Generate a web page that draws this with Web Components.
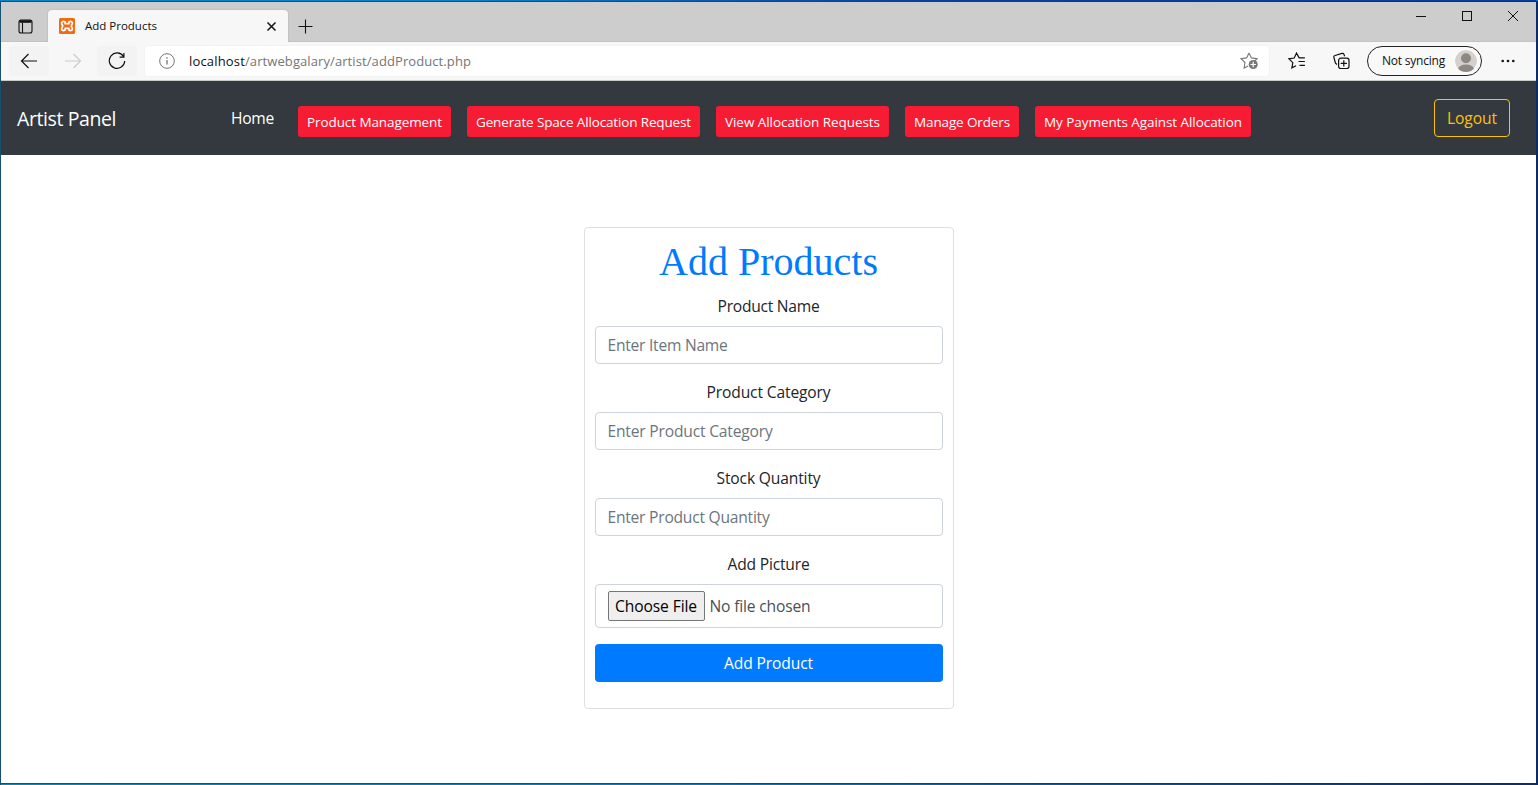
<!DOCTYPE html>
<html lang="en">
<head>
<meta charset="utf-8">
<title>Add Products</title>
<style>
html, body { margin: 0; height: 100%; overflow: hidden; }
body { font-family: "Open Sans", "Noto Sans", sans-serif; color: #212529; }
</style>
</head>
<body>
<app-window></app-window>
<script>
const define = (name, html, ready) => {
  const template = document.createElement('template');
  template.innerHTML = html;
  customElements.define(name, class extends HTMLElement {
    constructor() {
      super();
      this.attachShadow({ mode: 'open' }).append(template.content.cloneNode(true));
    }
    connectedCallback() { if (ready) ready(this, this.shadowRoot); }
  });
};

// One line of text, tracked so that it fills the given width.
const tracking = (text, font, width) => {
  const ctx = document.createElement('canvas').getContext('2d');
  ctx.font = font;
  return (width - ctx.measureText(text).width) / text.length;
};
define('fit-text', `<style>
:host { display: inline-block; white-space: pre; flex: none; }
</style><slot></slot>`, el => {
  const w = +el.getAttribute('w');
  const cs = getComputedStyle(el);
  el.style.width = w + 'px';
  el.style.letterSpacing = tracking(el.textContent, cs.fontSize + ' ' + cs.fontFamily, w) + 'px';
});

define('tab-strip', `<style>
:host { display: flex; height: 40px; background: #cdcdcd; box-shadow: inset 0 -1px #c3c3c3; align-items: stretch; color: #111; }
svg { display: block; flex: none; }
.menu { padding: 17px 15px 0 17px; }
.tab { display: flex; align-items: center; width: 240px; height: 32px; margin-top: 8px; background: #f7f7f7; border-radius: 4px 4px 0 0; font-size: 11.5px; box-sizing: border-box; padding: 0 11px; box-shadow: 0 0 2px #0003; clip-path: inset(-3px -3px 0 -3px); }
.tab fit-text { margin: 0 auto 2px 10px; }
.plus { margin: 17px 0 0 10px; }
.controls { display: flex; margin-left: auto; gap: 34px; padding: 7px 17px 0 0; }
</style>
<svg class="menu" width="15" height="15" viewBox="0 0 15 15" fill="none" stroke="#111" stroke-width="1.1"><rect x="1" y="1" width="13" height="13" rx="2"/><path d="M1.500 2.500h12" stroke-width="2.600"/><path d="M4.500 4v10"/></svg>
<div class="tab">
<svg width="16" height="16" viewBox="0 0 16 16"><rect width="16" height="16" rx="1.500" fill="#f56a10"/><path d="M6.100 3.900C4 2.800 2.500 3.900 2.600 5.300 2.700 6.500 3.700 7 3.700 8s-1 1.500-1.100 2.700C2.500 12.100 4 13.200 6.100 12.100V10.300H9.900V12.100C12 13.200 13.500 12.100 13.400 10.700 13.300 9.500 12.300 9 12.300 8s1-1.500 1.100-2.700C13.500 3.900 12 2.800 9.900 3.900V5.700H6.100Z" fill="none" stroke="#fff" stroke-width="1.700" stroke-linejoin="round"/></svg>
<fit-text w="72">Add Products</fit-text>
<svg width="11" height="11" viewBox="0 0 11 11" stroke="#111" stroke-width="1.5"><path d="M1.500 1.500l8 8M9.500 1.500l-8 8"/></svg>
</div>
<svg class="plus" width="15" height="15" viewBox="0 0 15 15" stroke="#111" stroke-width="1.100"><path d="M7.500 .5v14M.5 7.500h14"/></svg>
<div class="controls">
<svg width="12" height="14" viewBox="0 0 12 14" stroke="#111"><path d="M1 7.500h10"/></svg>
<svg width="12" height="14" viewBox="0 0 12 14" stroke="#111" fill="none"><rect x="1.500" y="2.500" width="9" height="9"/></svg>
<svg width="12" height="14" viewBox="0 0 12 14" stroke="#111"><path d="M1 2l10 10M11 2L1 12"/></svg>
</div>`);

define('address-bar', `<style>
:host { display: flex; height: 38px; background: #f7f7f7; border-bottom: 1px solid #c9cccb; align-items: center; box-sizing: content-box; color: #111; }
svg { display: block; flex: none; }
.btn { display: flex; align-items: center; justify-content: center; width: 40px; height: 30px; margin-left: 8px; border-radius: 3px; background: #f3f3f3; }
.btn + .btn { margin-left: 4px; }
.box { display: flex; align-items: center; flex: none; width: 1124px; height: 30px; margin-left: 8px; padding: 0 11px 0 14px; box-sizing: border-box; background: #fff; border-radius: 3px; box-shadow: 0 0 2px #0001; font-size: 13px; color: #757575; }
.box .host { margin-left: 14px; color: #111; }
.box svg:last-child { margin-left: auto; }
.fav { margin-left: 19px; }
.col { margin-left: 27px; }
.pill { display: flex; align-items: center; justify-content: space-between; flex: none; width: 115px; height: 30px; margin-left: 17px; padding: 0 4px 0 14px; box-sizing: border-box; border: 1px solid #222; border-radius: 15px; background: #f9f9f9; font-size: 12px; }
.pill fit-text { margin-bottom: 1px; }
.dots { margin-left: 19px; }
</style>
<div class="btn"><svg width="18" height="16" viewBox="0 0 18 16" fill="none" stroke="#111" stroke-width="1.200"><path d="M17 8H1.500M8.500 1L1.500 8l7 7"/></svg></div>
<div class="btn" style="background:none"><svg width="18" height="16" viewBox="0 0 18 16" fill="none" stroke="#ccc" stroke-width="1.200"><path d="M1 8h15.500M9.500 1l7 7-7 7"/></svg></div>
<div class="btn"><svg width="18" height="18" viewBox="0 0 18 18" fill="none" stroke="#111" stroke-width="1.200"><path d="M15.500 4.500A7.700 7.700 0 1 0 16.700 9M15.900 1v4.200h-4.300"/></svg></div>
<div class="box">
<svg width="16" height="16" viewBox="0 0 16 16" fill="none" stroke="#757575"><circle cx="8" cy="8" r="7.300"/><path d="M8 7v4.500M8 4.300v1.400" stroke-width="1.300"/></svg>
<fit-text w="56" class="host">localhost</fit-text><fit-text w="226">/artwebgalary/artist/addProduct.php</fit-text>
<svg width="18" height="18" viewBox="0 0 18 18"><path d="M9 .9l2.400 5 5.600.8-2.400 2.300M9 .9L6.600 5.900 1 6.700l4 3.800L4.100 16 8.200 13.900" fill="none" stroke="#777" stroke-width="1.100"/><circle cx="13.200" cy="12.500" r="4.500" fill="#777"/><path d="M13.200 9.800v5.400M10.500 12.500h5.400" stroke="#fff" stroke-width="1.200"/></svg>
</div>
<svg class="fav" width="18" height="18" viewBox="0 0 18 18" fill="none" stroke="#111" stroke-width="1.200"><path d="M11.300 6.100L8.500 1.100 6.200 6 1 6.800l3.800 3.800-.9 5.300L8 13.700M11 5.800h5.900M10.500 9.500h6.400M11.500 13.300h5.400"/></svg>
<svg class="col" width="17" height="18" viewBox="0 0 17 18" fill="none" stroke="#111" stroke-width="1.200"><path d="M4 12.500L2.500 11.200.9 5.500Q.5 4 2 3.500L9 1.400Q10.500 1 11 2.400l.6 1.900"/><rect x="5.600" y="6.200" width="10.400" height="10.300" rx="2.200"/><path d="M10.800 8.300v6.200M7.700 11.400h6.200"/></svg>
<div class="pill"><fit-text w="63">Not syncing</fit-text><svg width="22" height="22" viewBox="0 0 22 22"><defs><clipPath id="c"><circle cx="11" cy="11" r="11"/></clipPath></defs><g clip-path="url(#c)"><circle cx="11" cy="11" r="11" fill="#d5d0cd"/><circle cx="11" cy="8.300" r="5" fill="#8e8883"/><ellipse cx="11" cy="19.500" rx="8" ry="5" fill="#8e8883"/></g></svg></div>
<svg class="dots" width="14" height="4" viewBox="0 0 14 4" fill="#111"><circle cx="1.700" cy="2" r="1.300"/><circle cx="7" cy="2" r="1.300"/><circle cx="12.300" cy="2" r="1.300"/></svg>`);

define('nav-button', `<style>
:host { display: flex; align-items: center; justify-content: center; height: 31px; padding: 0 9px; box-sizing: border-box; border-radius: 3px; background: #f61c34; color: #fff; font-size: 13.500px; }
</style><slot></slot>`);

define('site-nav', `<style>
:host { display: flex; align-items: flex-start; height: 74px; background: #33393f; color: #fff; box-sizing: border-box; padding: 18px 26px 0 16px; }
.brand { font-size: 19.500px; line-height: 40px; }
.home { font-size: 15.600px; line-height: 38px; margin-left: 115px; }
.links { display: flex; gap: 16px; margin: 7px auto 0 24px; }
.logout { display: flex; align-items: center; height: 38px; box-sizing: border-box; padding: 0 12px 1px; border: 1px solid #ffc107; border-radius: 4px; color: #ffc107; font-size: 15.600px; }
</style>
<fit-text w="99" class="brand">Artist Panel</fit-text>
<fit-text w="43" class="home">Home</fit-text>
<div class="links">
<nav-button><fit-text w="135">Product Management</fit-text></nav-button>
<nav-button><fit-text w="215">Generate Space Allocation Request</fit-text></nav-button>
<nav-button><fit-text w="155">View Allocation Requests</fit-text></nav-button>
<nav-button><fit-text w="96">Manage Orders</fit-text></nav-button>
<nav-button><fit-text w="198">My Payments Against Allocation</fit-text></nav-button>
</div>
<div class="logout"><fit-text w="50">Logout</fit-text></div>`);

define('form-field', `<style>
:host { display: flex; flex-direction: column; align-items: center; margin-bottom: 16px; font-size: 15.600px; }
.label { line-height: 24px; height: 24px; margin-bottom: 8px; }
input { display: block; width: 100%; height: 38px; box-sizing: border-box; padding: 6px 12px; border: 1px solid #ced4da; border-radius: 4px; background: #fff; font: inherit; color: #495057; }
input::placeholder { color: #6c757d; opacity: 1; }
</style><div class="label"><slot></slot></div><slot name="control"><input type="text"></slot>`, (el, root) => {
  const hint = el.getAttribute('hint');
  if (!hint) return;
  const input = root.querySelector('input');
  const cs = getComputedStyle(input);
  input.placeholder = hint;
  input.style.letterSpacing = tracking(hint, cs.fontSize + ' ' + cs.fontFamily, +el.getAttribute('hint-width')) + 'px';
});

define('file-picker', `<style>
:host { display: flex; align-items: center; width: 100%; height: 44px; box-sizing: border-box; padding: 0 12px; border: 1px solid #ced4da; border-radius: 4px; color: #495057; }
.choose { display: flex; align-items: center; justify-content: center; width: 97px; height: 30px; margin-right: 5px; box-sizing: border-box; border: 1px solid #767676; border-radius: 2px; background: #efefef; color: #000; }
</style><div class="choose"><fit-text w="82">Choose File</fit-text></div><fit-text w="101">No file chosen</fit-text>`);

define('product-form', `<style>
:host { display: block; width: 370px; height: 482px; box-sizing: border-box; padding: 10px; border: 1px solid #dfdfdf; border-radius: 4px; background: #fff; }
h1 { margin: 0 0 8px; font: 400 40px/48px "Liberation Serif", serif; text-align: center; color: #007bff; }
.submit { display: flex; align-items: center; justify-content: center; height: 38px; border-radius: 4px; background: #007bff; color: #fff; font-size: 15.600px; }
</style>
<h1><fit-text w="219">Add Products</fit-text></h1>
<form-field hint="Enter Item Name" hint-width="120"><fit-text w="102">Product Name</fit-text></form-field>
<form-field hint="Enter Product Category" hint-width="165"><fit-text w="124">Product Category</fit-text></form-field>
<form-field hint="Enter Product Quantity" hint-width="162"><fit-text w="104">Stock Quantity</fit-text></form-field>
<form-field><fit-text w="82">Add Picture</fit-text><file-picker slot="control"></file-picker></form-field>
<div class="submit"><fit-text w="89">Add Product</fit-text></div>`);

define('app-window', `<style>
:host { display: flex; flex-direction: column; height: 785px; width: 1538px; box-sizing: border-box; padding: 2px 2px 2px 1px; background: linear-gradient(90deg, #17506f, #0d5080 40%, #0d2c66); box-shadow: inset 0 1px #0a6fc0; }
main { flex: 1; display: flex; justify-content: center; align-items: flex-start; padding-top: 72px; background: #fff; }
.edge { height: 1px; margin-bottom: 1px; flex: none; background: linear-gradient(90deg, #0884c4, #0b80c4 30%, #0a3f9c 60%); margin-top: -2px; }
.foot { height: 1px; margin: 1px 0 -2px; flex: none; background: linear-gradient(90deg, #0d86b4, #0a78b8 45%, #0c2f68); }
</style>
<div class="edge"></div>
<tab-strip></tab-strip>
<address-bar></address-bar>
<site-nav></site-nav>
<main><product-form></product-form></main>
<div class="foot"></div>`);
</script>
</body>
</html>
